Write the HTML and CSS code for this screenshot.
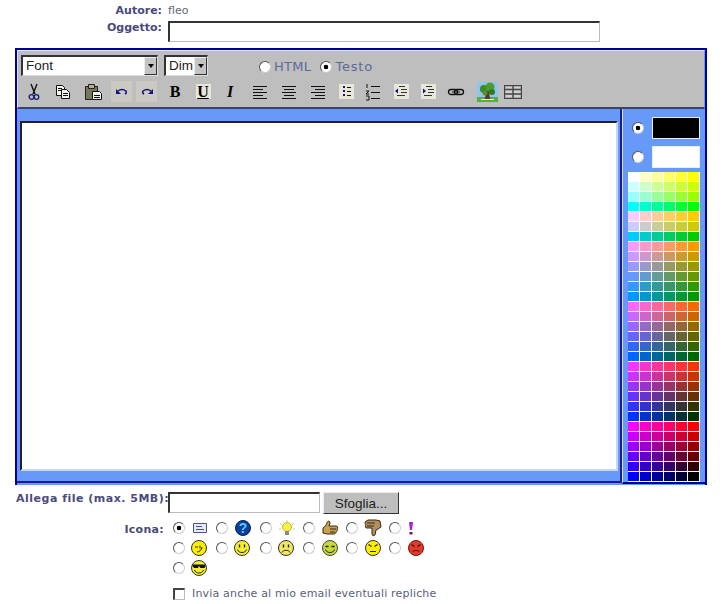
FILE: index.html
```html
<!DOCTYPE html>
<html lang="it">
<head>
  <meta charset="UTF-8">
  <title>Nuovo messaggio</title>
  <link rel="stylesheet" href="styles.css">
</head>
<body>
<form class="post">
  <div class="row row-author">
    <span class="lbl">Autore:</span>
    <span class="author">fleo</span>
  </div>
  <div class="row row-subject">
    <label class="lbl">Oggetto:</label>
    <input class="txt subject" type="text">
  </div>

  <div class="editor">
    <div class="toolbar">
      <div class="tb-top">
        <div class="sel sel-font"><span class="sel-val">Font</span><span class="sel-arrow"></span></div>
        <div class="sel sel-size"><span class="sel-val">Dim</span><span class="sel-arrow"></span></div>
        <label class="mode mode-html"><input class="rad" type="radio" name="mode">HTML</label>
        <label class="mode mode-text"><input class="rad" type="radio" name="mode" checked>Testo</label>
      </div>
      <div class="tb-btns">
        <span class="btn"><svg width="20" height="20" viewBox="0 0 20 20"><path d="M7 2l4 10M13 2L9 12" stroke="#111" stroke-width="1.400" fill="none"/><circle cx="7.500" cy="15" r="2.300" fill="none" stroke="#1a1a80" stroke-width="1.300"/><circle cx="12.500" cy="15" r="2.300" fill="none" stroke="#1a1a80" stroke-width="1.300"/></svg></span>
        <span class="btn p1"><svg width="20" height="20" viewBox="0 0 20 20"><path d="M3.500 3.500h6l2 2v8h-8z" fill="#f4f4ee" stroke="#111"/><path d="M5 6.500h4M5 8.500h4" stroke="#111"/><path d="M8.500 7.500h5l3 3v6h-8z" fill="#f4f4ee" stroke="#111"/><path d="M10 11.500h5M10 13.500h5" stroke="#111"/></svg></span>
        <span class="btn p2"><svg width="20" height="20" viewBox="0 0 20 20"><path d="M2.500 4.500h12v13h-12z" fill="#77775a" stroke="#222"/><path d="M5.500 2.500h6v4h-6z" fill="#b5b08a" stroke="#222"/><path d="M9.500 9.500h7l2 2v6h-9z" fill="#f4f4ee" stroke="#111"/><path d="M11 13.500h6M11 15.500h6" stroke="#111"/></svg></span>
        <span class="btn hl p1"><svg width="20" height="20" viewBox="0 0 20 20"><path d="M6 9q4-3 8 0q1 2-1 3" fill="none" stroke="#14147a" stroke-width="1.500"/><path d="M4 7v5h5z" fill="#14147a"/></svg></span>
        <span class="btn hl n2"><svg width="20" height="20" viewBox="0 0 20 20"><path d="M14 9q-4-3-8 0q-1 2 1 3" fill="none" stroke="#14147a" stroke-width="1.500"/><path d="M16 7v5h-5z" fill="#14147a"/></svg></span>
        <span class="btn ch ch-b p1">B</span>
        <span class="btn ch ch-u"><i class="chip">U</i></span>
        <span class="btn ch ch-i n1">I</span>
        <span class="btn p2"><svg width="20" height="20" viewBox="0 0 20 20"><path d="M3 4.500h14M3 7.500h10M3 10.500h14M3 13.500h10M3 16.500h14" stroke="#111"/></svg></span>
        <span class="btn p1"><svg width="20" height="20" viewBox="0 0 20 20"><path d="M3 4.500h14M5 7.500h10M3 10.500h14M5 13.500h10M3 16.500h14" stroke="#111"/></svg></span>
        <span class="btn p1"><svg width="20" height="20" viewBox="0 0 20 20"><path d="M3 4.500h14M7 7.500h10M3 10.500h14M7 13.500h10M3 16.500h14" stroke="#111"/></svg></span>
        <span class="btn"><i class="chip"><svg width="15" height="15" viewBox="0 0 15 15"><path d="M4 2h2v2H4zM4 6h2v2H4zM4 10h2v2H4z" fill="#14147a"/><path d="M8 3.500h4M8 7.500h4M8 11.500h4" stroke="#111"/></svg></i></span>
        <span class="btn n1"><svg width="20" height="20" viewBox="0 0 20 20"><path d="M4 2v4M3 9h3l-3 3h3M3 14h3v4H3" stroke="#111" fill="none"/><path d="M8 4.500h9M8 10.500h9M8 16.500h9" stroke="#111"/></svg></span>
        <span class="btn"><i class="chip"><svg width="15" height="15" viewBox="0 0 15 15"><path d="M5 2.500h6M7 5.500h6M7 8.500h6M3 11.500h8" stroke="#333"/><path d="M1 7l3-2.500v5z" fill="#14147a"/></svg></i></span>
        <span class="btn n1"><i class="chip"><svg width="15" height="15" viewBox="0 0 15 15"><path d="M5 2.500h6M7 5.500h6M7 8.500h6M3 11.500h8" stroke="#333"/><path d="M5 7L2 4.500v5z" fill="#14147a"/></svg></i></span>
        <span class="btn"><svg width="20" height="20" viewBox="0 0 20 20"><rect x="2.500" y="7.500" width="9" height="5" rx="2.500" fill="none" stroke="#111" stroke-width="1.300"/><rect x="8.500" y="7.500" width="9" height="5" rx="2.500" fill="none" stroke="#111" stroke-width="1.300"/><path d="M6 10h8" stroke="#111"/></svg></span>
        <span class="btn p3 pic"><svg width="21" height="20" viewBox="0 0 21 20"><path d="M0 0h21v15H0z" fill="#8fc4ee"/><path d="M0 15h21v5H0z" fill="#56b040"/><path d="M9 9h3l1 8H8z" fill="#5b3a1e"/><circle cx="7" cy="7" r="4" fill="#3c8a2a"/><circle cx="13" cy="5" r="4.500" fill="#4d9c2f"/><circle cx="15" cy="10" r="3" fill="#2f7a24"/><circle cx="8" cy="11" r="2.500" fill="#5c8f2c"/><path d="M4 17h13v1H4z" fill="#dff0d0"/></svg></span>
        <span class="btn n2"><svg width="18" height="14" viewBox="0 0 18 14"><path d="M0.500 0.500h17v13H0.500zM9 0.500v13M0.500 4.500h17M0.500 9h17" fill="#cfcfcf" stroke="#444" stroke-width="1.400"/></svg></span>
      </div>
    </div>

    <div class="edit-area">
      <div class="edit-pane">
        <textarea class="body-text"></textarea>
      </div>
      <div class="palette">
        <div class="pick">
          <input class="rad" type="radio" name="target" checked>
          <span class="swatch swatch-fg"></span>
        </div>
        <div class="pick">
          <input class="rad" type="radio" name="target">
          <span class="swatch swatch-bg"></span>
        </div>
        <div class="colors" id="colors"></div>
      </div>
    </div>
  </div>

  <div class="row row-file">
    <label class="lbl">Allega file (max. 5MB):</label>
    <input class="txt file-name" type="text">
    <button class="browse" type="button">Sfoglia...</button>
  </div>

  <div class="row row-icons">
    <span class="lbl lbl-icons">Icona:</span>
    <div class="icons">
      <label class="opt"><input class="rad" type="radio" name="icon" checked>
        <svg class="ico" width="18" height="18" viewBox="0 0 18 18"><path d="M2.500 4.500h13v9h-13z" fill="#e8e8f4" stroke="#4a4f90"/><path d="M5 7.500h6M5 10.500h8" stroke="#4a4f90"/></svg></label>
      <label class="opt"><input class="rad" type="radio" name="icon">
        <svg class="ico" width="18" height="18" viewBox="0 0 18 18"><circle cx="9" cy="9" r="7.500" fill="#0b3f9e" stroke="#041f5c"/><text class="q" x="9" y="14" text-anchor="middle">?</text></svg></label>
      <label class="opt"><input class="rad" type="radio" name="icon">
        <svg class="ico" width="18" height="18" viewBox="0 0 18 18"><path d="M9 1v2M2 4l2 2M16 4l-2 2M1 10h2M15 10h2" stroke="#c9c9a0"/><circle cx="9" cy="8" r="4.500" fill="#f6f04a" stroke="#c8b828"/><path d="M7 12h4v4H7z" fill="#8a8a80"/></svg></label>
      <label class="opt"><input class="rad" type="radio" name="icon">
        <svg class="ico" width="18" height="18" viewBox="0 0 18 18"><path d="M2 9c2-1 3-3 4-5 0-2 3-3 3 0l-1 3h7c2 0 2 2 1 3 1 1 0 2-1 3 0 1-1 2-2 2H6l-4-1z" fill="#c8a050" stroke="#3a2a10"/><path d="M9 10h6M9 13h5" stroke="#3a2a10"/></svg></label>
      <label class="opt"><input class="rad" type="radio" name="icon">
        <svg class="ico" width="18" height="18" viewBox="0 0 18 18"><path d="M1 3l3-2h8l4 1 1 6-3 2-2 1-1 5c-1 1-3 1-3-1V9H3C1 9 1 7 2 6 1 5 1 4 1 3z" fill="#b09060" stroke="#3a2a10"/><path d="M3 4h8M3 7h7" stroke="#3a2a10"/></svg></label>
      <label class="opt"><input class="rad" type="radio" name="icon">
        <svg class="ico bang" width="6" height="14" viewBox="0 0 6 14"><path d="M1 1h4l-1 8H2z" fill="#a020e0"/><path d="M1.500 11h3v2.500h-3z" fill="#7a1a50"/></svg></label>

      <label class="opt"><input class="rad" type="radio" name="icon">
        <svg class="ico ico-l" width="18" height="18" viewBox="0 0 18 18"><circle cx="9" cy="9" r="7.500" fill="#ffee00" stroke="#333"/><path d="M5 8h3M10 6.500v3M12 8c0 3-3 5-5 5" stroke="#222" fill="none"/></svg></label>
      <label class="opt"><input class="rad" type="radio" name="icon">
        <svg class="ico ico-l" width="18" height="18" viewBox="0 0 18 18"><circle cx="9" cy="9" r="7.500" fill="#f4ee30" stroke="#333"/><path d="M6.500 5.500v3M11.500 5.500v3" stroke="#222" stroke-width="1.400"/><path d="M4.500 10.500c1 4 8 4 9 0" stroke="#222" fill="none"/></svg></label>
      <label class="opt"><input class="rad" type="radio" name="icon">
        <svg class="ico ico-l" width="18" height="18" viewBox="0 0 18 18"><circle cx="9" cy="9" r="7.500" fill="#f2e860" stroke="#333"/><path d="M6.500 5.500v3M11.500 5.500v3" stroke="#222" stroke-width="1.400"/><path d="M5 13.500c1-3 7-3 8 0" stroke="#222" fill="none"/></svg></label>
      <label class="opt"><input class="rad" type="radio" name="icon">
        <svg class="ico" width="18" height="18" viewBox="0 0 18 18"><circle cx="9" cy="9" r="7.500" fill="#c6d83a" stroke="#444"/><path d="M4.500 7.500h3M10.500 7.500h3" stroke="#222" stroke-width="1.400"/><path d="M4.500 10.500c1 4 8 4 9 0" stroke="#222" fill="none"/></svg></label>
      <label class="opt"><input class="rad" type="radio" name="icon">
        <svg class="ico" width="18" height="18" viewBox="0 0 18 18"><circle cx="9" cy="9" r="7.500" fill="#ffee00" stroke="#333"/><path d="M4.500 5.500l3 2M13.500 5.500l-3 2M6 12.500h6" stroke="#222" stroke-width="1.200" fill="none"/></svg></label>
      <label class="opt"><input class="rad" type="radio" name="icon">
        <svg class="ico" width="18" height="18" viewBox="0 0 18 18"><circle cx="9" cy="9" r="7.500" fill="#e03a2a" stroke="#7a1510"/><path d="M4.500 5.500l3 2M13.500 5.500l-3 2" stroke="#5a0a08" stroke-width="1.400"/><path d="M5.500 13c1-2 6-2 7 0" stroke="#5a0a08" fill="none"/></svg></label>

      <label class="opt"><input class="rad" type="radio" name="icon">
        <svg class="ico ico-l" width="18" height="18" viewBox="0 0 18 18"><circle cx="9" cy="9" r="7.500" fill="#f4ee30" stroke="#333"/><path d="M2.500 5.500h13v1.500l-1 2h-4L9 7 8 9H4L2.500 7z" fill="#111"/><path d="M4.500 11c1 4 8 4 9 0" stroke="#222" fill="none"/></svg></label>
    </div>
  </div>

  <div class="row row-notify">
    <label class="notify"><input class="chk" type="checkbox">Invia anche al mio email eventuali repliche</label>
  </div>
</form>
<script src="script.js"></script>
</body>
</html>
```

FILE: styles.css
```css
body {
  margin: 0;
  background: #fff;
  font-family: "DejaVu Sans", sans-serif;
  font-size: 11px;
  color: #5a6078;
}

.post {
  width: 723px;
  padding-top: 4px;
}

.row {
  display: flex;
  align-items: flex-start;
}

.lbl {
  width: 162px;
  margin-right: 6px;
  flex: none;
  text-align: right;
  font-weight: bold;
  color: #4a4a7c;
  white-space: nowrap;
}

.row-author {
  height: 17px;
}

.author {
  color: #667;
}

.row-subject {
  height: 27px;
}

.txt {
  box-sizing: border-box;
  height: 21px;
  padding: 0;
  background: #fff;
  border-style: solid;
  border-width: 2px 1px 1px 2px;
  border-color: #333 #bbb #bbb #333;
  border-radius: 0;
  outline: none;
}

.subject {
  width: 432px;
}

/* editor frame */
.editor {
  box-sizing: border-box;
  width: 692px;
  height: 437px;
  margin-left: 15px;
  background: #6699f8;
  border: 2px solid #000099;
  border-bottom: 0;
  display: flex;
  flex-direction: column;
}

.toolbar {
  box-sizing: border-box;
  height: 59px;
  background: #bebebe;
  border-top: 1px solid #dfe6f5;
  border-left: 1px solid #dfe6f5;
  border-right: 1px solid #6699f8;
  border-bottom: 2px solid #3c3c8c;
  padding: 4px 0 0 3px;
}

.tb-top {
  display: flex;
  align-items: center;
  height: 21px;
}

.sel {
  box-sizing: border-box;
  display: flex;
  height: 21px;
  background: #fff;
  border-style: solid;
  border-width: 2px 1px 1px 2px;
  border-color: #333 #ddd #ddd #333;
  font-family: "Liberation Sans", sans-serif;
  font-size: 13.5px;
  color: #222;
}

.sel-val {
  flex: 1;
  padding-left: 3px;
  line-height: 17px;
}

.sel-font {
  width: 137px;
  margin-right: 6px;
}

.sel-size {
  width: 44px;
  margin-right: 51px;
}

.sel-arrow {
  box-sizing: border-box;
  position: relative;
  width: 13px;
  background: #c4c4c4;
  border-style: solid;
  border-width: 1px;
  border-color: #eee #333 #333 #eee;
}

.sel-arrow::after {
  content: "";
  position: absolute;
  left: 3px;
  top: 6px;
  border: 3px solid transparent;
  border-top: 4px solid #000;
  border-bottom: 0;
}

.rad {
  appearance: none;
  box-sizing: border-box;
  flex: none;
  width: 12px;
  height: 12px;
  margin: 0;
  background: #fff;
  border-radius: 50%;
  border: 1px solid;
  border-color: #555 #ccc #ccc #555;
}

.rad:checked {
  background: radial-gradient(circle, #000 0 2px, #fff 2.6px);
}

.mode {
  display: flex;
  align-items: center;
  gap: 3px;
  font-size: 13px;
  letter-spacing: 0.3px;
  color: #5c6a98;
  margin-top: 2px;
}

.mode-html {
  margin-right: 9px;
}

.mode-text {
  letter-spacing: 0.8px;
}

.tb-btns {
  display: flex;
  margin-top: 5px;
  margin-left: 2px;
}

.btn {
  flex: none;
  display: flex;
  align-items: center;
  justify-content: center;
  width: 22px;
  height: 21px;
  margin-right: 6px;
}

.btn.hl {
  width: 21px;
  background: #cbc9c2;
}

.btn.p1 { margin-left: 1px; }
.btn.p2 { margin-left: 2px; }
.btn.p3 { margin-left: 3px; }
.btn.n1 { margin-left: -1px; }
.btn.n2 { margin-left: -2px; }

.chip {
  display: flex;
  align-items: center;
  justify-content: center;
  width: 15px;
  height: 15px;
  background: #e9e7da;
  font-style: normal;
}

.ch {
  font-family: "Liberation Serif", serif;
  font-size: 16px;
  font-weight: bold;
  color: #000;
}

.ch-u .chip {
  text-decoration: underline;
}

.ch-i {
  font-style: italic;
}

/* writing area and colour table */
.edit-area {
  display: flex;
  align-items: flex-start;
}

.edit-pane {
  box-sizing: border-box;
  flex: none;
  width: 605px;
  height: 374px;
  padding: 12px 0 0 3px;
  border-right: 2px solid #1c1c90;
  border-bottom: 2px solid #1c1c90;
}

.body-text {
  display: block;
  box-sizing: border-box;
  width: 598px;
  height: 350px;
  padding: 0;
  resize: none;
  background: #fff;
  border-style: solid;
  border-width: 2px;
  border-color: #222 #c8d8f0 #c8d8f0 #222;
  border-radius: 0;
  outline: none;
}

.palette {
  flex: 1;
  box-sizing: border-box;
  height: 375px;
  padding: 8px 0 0 5px;
  border-left: 1px solid #cfdcf5;
  border-bottom: 2px solid #000099;
}

.pick {
  display: flex;
  align-items: center;
  gap: 8px;
  height: 22px;
  margin-left: 4px;
}

.pick + .pick {
  margin-top: 7px;
}

.swatch {
  box-sizing: border-box;
  width: 48px;
  height: 22px;
  border: 1px solid #e8eefc;
}

.swatch-fg {
  background: #000;
}

.swatch-bg {
  background: #fff;
}

.colors {
  display: grid;
  grid-template-columns: repeat(6, 12px);
  grid-auto-rows: 10px;
  margin-top: 4px;
}

.cell {
  box-sizing: border-box;
  border: 1px solid #fff;
  border-width: 0 1px 1px 0;
}

/* below the editor */
.row-file {
  height: 26px;
  margin-top: 7px;
}

.row-file .lbl {
  width: 147px;
  margin-left: 16px;
  margin-right: 5px;
  text-align: left;
  letter-spacing: 0.5px;
}

.file-name {
  width: 152px;
}

.browse {
  box-sizing: border-box;
  width: 76px;
  height: 22px;
  margin-left: 3px;
  padding: 0;
  background: #bebebe;
  border-style: solid;
  border-width: 1px;
  border-color: #eee #333 #333 #eee;
  border-radius: 0;
  font-family: "Liberation Sans", sans-serif;
  font-size: 13.5px;
  color: #222;
}

.row-icons {
  height: 60px;
}

.lbl-icons {
  width: 164px;
  margin-right: 8px;
  padding-top: 5px;
  letter-spacing: 0.3px;
}

.icons {
  display: grid;
  grid-template-columns: repeat(6, 43.3px);
  grid-auto-rows: 20px;
}

.opt {
  display: flex;
  align-items: center;
}

.opt .rad {
  margin-left: 1px;
}

.ico {
  flex: none;
  margin-left: 6px;
}

.ico-l {
  margin-left: 5px;
}

.bang {
  margin-left: 7px;
}

.q {
  font-family: "Liberation Sans", sans-serif;
  font-size: 14px;
  font-weight: bold;
  fill: #5ac8ff;
}

.row-notify {
  margin-top: 9px;
  padding-left: 173px;
}

.notify {
  display: flex;
  align-items: center;
  letter-spacing: 0.18px;
  color: #5a6078;
}

.chk {
  appearance: none;
  box-sizing: border-box;
  width: 12px;
  height: 12px;
  margin: 0 7px 0 0;
  background: #fff;
  border-style: solid;
  border-width: 2px 1px 1px 2px;
  border-color: #444 #bbb #bbb #444;
  border-radius: 0;
}
```

FILE: script.js
```js
// colour table: rows are green/red pairs, columns go down in blue
const colorsDiv = document.getElementById("colors");
const groups = [
  ["ff", ["ff", "cc", "99", "00"]],
  ["cc", ["ff", "cc", "00"]],
  ["99", ["ff", "cc", "99", "66", "33", "00"]],
  ["66", ["ff", "cc", "99", "66", "33", "00"]],
  ["33", ["ff", "cc", "99", "66", "33", "00"]],
  ["00", ["ff", "cc", "99", "66", "33", "00"]]
];
const blues = ["ff", "cc", "99", "66", "33", "00"];

groups.forEach(([green, reds]) => {
  reds.forEach((red) => {
    blues.forEach((blue) => {
      const cell = document.createElement("span");
      cell.className = "cell";
      cell.style.background = `#${red}${green}${blue}`;
      colorsDiv.appendChild(cell);
    });
  });
});
```
